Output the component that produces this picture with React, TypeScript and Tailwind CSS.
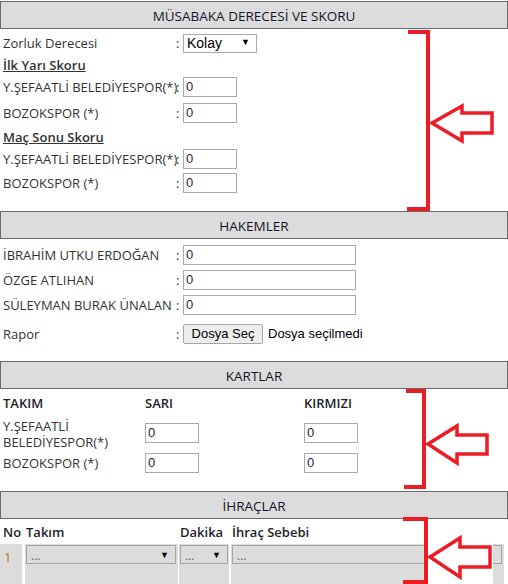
import React from "react";

function SectionHeader({ title }: { title: string }) {
  return (
    <div className="flex h-[28px] items-center justify-center border border-[#6b6b6b] bg-[#dcdcdc] pt-[2px] text-[13.5px] text-[#14142a]">
      {title}
    </div>
  );
}

function NumInput({ w = "w-[54px]" }: { w?: string }) {
  return (
    <div
      className={`${w} flex h-[20px] items-center border border-[#a9a9a9] bg-white pl-[2px] font-['Liberation_Sans',Arial,sans-serif] text-[13px] text-[#2d1a44]`}
    >
      0
    </div>
  );
}

function Row({ label, h, children }: { label: string; h: string; children: React.ReactNode }) {
  return (
    <div className={`flex ${h} items-center`}>
      <div className="w-[173px] whitespace-nowrap pt-[2px]">{label}</div>
      <div className="w-[7px] pt-[2px]">:</div>
      {children}
    </div>
  );
}

function GraySelect({ w }: { w: string }) {
  return (
    <div
      className={`${w} flex h-[19px] items-center justify-between border border-[#a4a4a4] bg-[#dcdcdc] pl-[4px] pr-[6px]`}
    >
      <span className="pt-[3px] text-[12px] leading-none text-[#8a5e22]">...</span>
      <span className="text-[9px] leading-none text-black">▼</span>
    </div>
  );
}

function Annotations() {
  const red = "#ed1c24";
  return (
    <svg
      className="pointer-events-none absolute left-0 top-0"
      width="508"
      height="584"
      viewBox="0 0 508 584"
    >
      <rect x="428" y="543" width="65" height="41" fill="#fff" />
      <g fill="none" stroke={red} strokeWidth="4" strokeLinejoin="miter">
        <path d="M408 32 H428 V209 H407" />
        <path d="M432 123 L462 106 V113 H492 V133 H462 V141 Z" strokeWidth="3.5" />
        <path d="M406 391 H424 V487 H404" />
        <path d="M428 444 L457 426 V435 H487 V454 H457 V463 Z" strokeWidth="3.5" />
        <path d="M403 519 H426 V582 H403" />
        <path d="M430 557 L460 538 V547 H490 V567 H460 V577 Z" strokeWidth="3.5" />
      </g>
    </svg>
  );
}

export default function App() {
  return (
    <div className="relative h-[584px] w-[508px] overflow-hidden bg-white pt-[1px] font-['Open_Sans',sans-serif] text-[13px] text-[#333]">
      {/* Müsabaka */}
      <SectionHeader title="MÜSABAKA DERECESİ VE SKORU" />
      <div className="pl-[3px] pt-[1px]">
        <Row label="Zorluk Derecesi" h="h-[26px]">
          <div className="flex h-[19px] w-[74px] items-center justify-between border border-[#a9a9a9] bg-white pl-[3px] pr-[6px] font-['Liberation_Sans',Arial,sans-serif] text-[14px] text-black">
            <span>Kolay</span>
            <span className="text-[9px]">▼</span>
          </div>
        </Row>
        <div className="flex h-[18px] items-center pt-[2px] font-semibold underline">İlk Yarı Skoru</div>
        <Row label="Y.ŞEFAATLİ BELEDİYESPOR(*)" h="h-[26px]">
          <NumInput />
        </Row>
        <Row label="BOZOKSPOR (*)" h="h-[25px]">
          <NumInput />
        </Row>
        <div className="flex h-[23px] items-center pt-[3px] font-semibold underline">Maç Sonu Skoru</div>
        <Row label="Y.ŞEFAATLİ BELEDİYESPOR(*)" h="h-[22px]">
          <NumInput />
        </Row>
        <Row label="BOZOKSPOR (*)" h="h-[26px]">
          <NumInput />
        </Row>
      </div>

      {/* Hakemler */}
      <div className="mt-[15px]">
        <SectionHeader title="HAKEMLER" />
      </div>
      <div className="pl-[3px] pt-[4px]">
        <Row label="İBRAHİM UTKU ERDOĞAN" h="h-[24px]">
          <NumInput w="w-[173px]" />
        </Row>
        <Row label="ÖZGE ATLIHAN" h="h-[25px]">
          <NumInput w="w-[173px]" />
        </Row>
        <Row label="SÜLEYMAN BURAK ÜNALAN" h="h-[25px]">
          <NumInput w="w-[173px]" />
        </Row>
        <Row label="Rapor" h="h-[34px]">
          <div className="flex items-center gap-[5px] font-['Liberation_Sans',Arial,sans-serif] text-[13px] text-black">
            <div className="flex h-[20px] w-[80px] items-center justify-center rounded-[2px] border border-[#a6a6a6] bg-[#ededed]">
              Dosya Seç
            </div>
            <span>Dosya seçilmedi</span>
          </div>
        </Row>
      </div>

      {/* Kartlar */}
      <div className="mt-[10px]">
        <SectionHeader title="KARTLAR" />
      </div>
      <div className="pl-[3px]">
        <div className="flex h-[28px] items-center pt-[2px] font-semibold text-[#1e1e2a]">
          <div className="w-[142px]">TAKIM</div>
          <div className="w-[159px]">SARI</div>
          <div>KIRMIZI</div>
        </div>
        <div className="flex h-[32px] items-center">
          <div className="w-[142px] pr-[8px] pt-[2px] leading-[16px]">Y.ŞEFAATLİ BELEDİYESPOR(*)</div>
          <div className="w-[159px]">
            <NumInput />
          </div>
          <NumInput />
        </div>
        <div className="flex h-[28px] items-center">
          <div className="w-[142px] pt-[2px]">BOZOKSPOR (*)</div>
          <div className="w-[159px]">
            <NumInput />
          </div>
          <NumInput />
        </div>
      </div>

      {/* İhraçlar */}
      <div className="mt-[14px]">
        <SectionHeader title="İHRAÇLAR" />
      </div>
      <div className="flex h-[25px] items-center pt-[3px] font-semibold text-[#1e1e2a]">
        <div className="w-[26px] pl-[3px]">No</div>
        <div className="w-[154px]">Takım</div>
        <div className="w-[52px]">Dakika</div>
        <div>İhraç Sebebi</div>
      </div>
      <div className="flex h-[48px]">
        <div className="w-[22px] bg-[#dcdcdc] pl-[4px] pt-[4px] text-[#b87408]">1</div>
        <div className="ml-[3px] w-[153px] bg-[#dcdcdc] pl-[1px] pt-[1px]">
          <GraySelect w="w-[150px]" />
        </div>
        <div className="ml-[1px] w-[50px] bg-[#dcdcdc] pl-[1px] pt-[1px]">
          <GraySelect w="w-[48px]" />
        </div>
        <div className="ml-[2px] w-[273px] bg-[#dcdcdc] pl-[1px] pt-[1px]">
          <GraySelect w="w-[270px]" />
        </div>
      </div>

      <Annotations />
    </div>
  );
}
